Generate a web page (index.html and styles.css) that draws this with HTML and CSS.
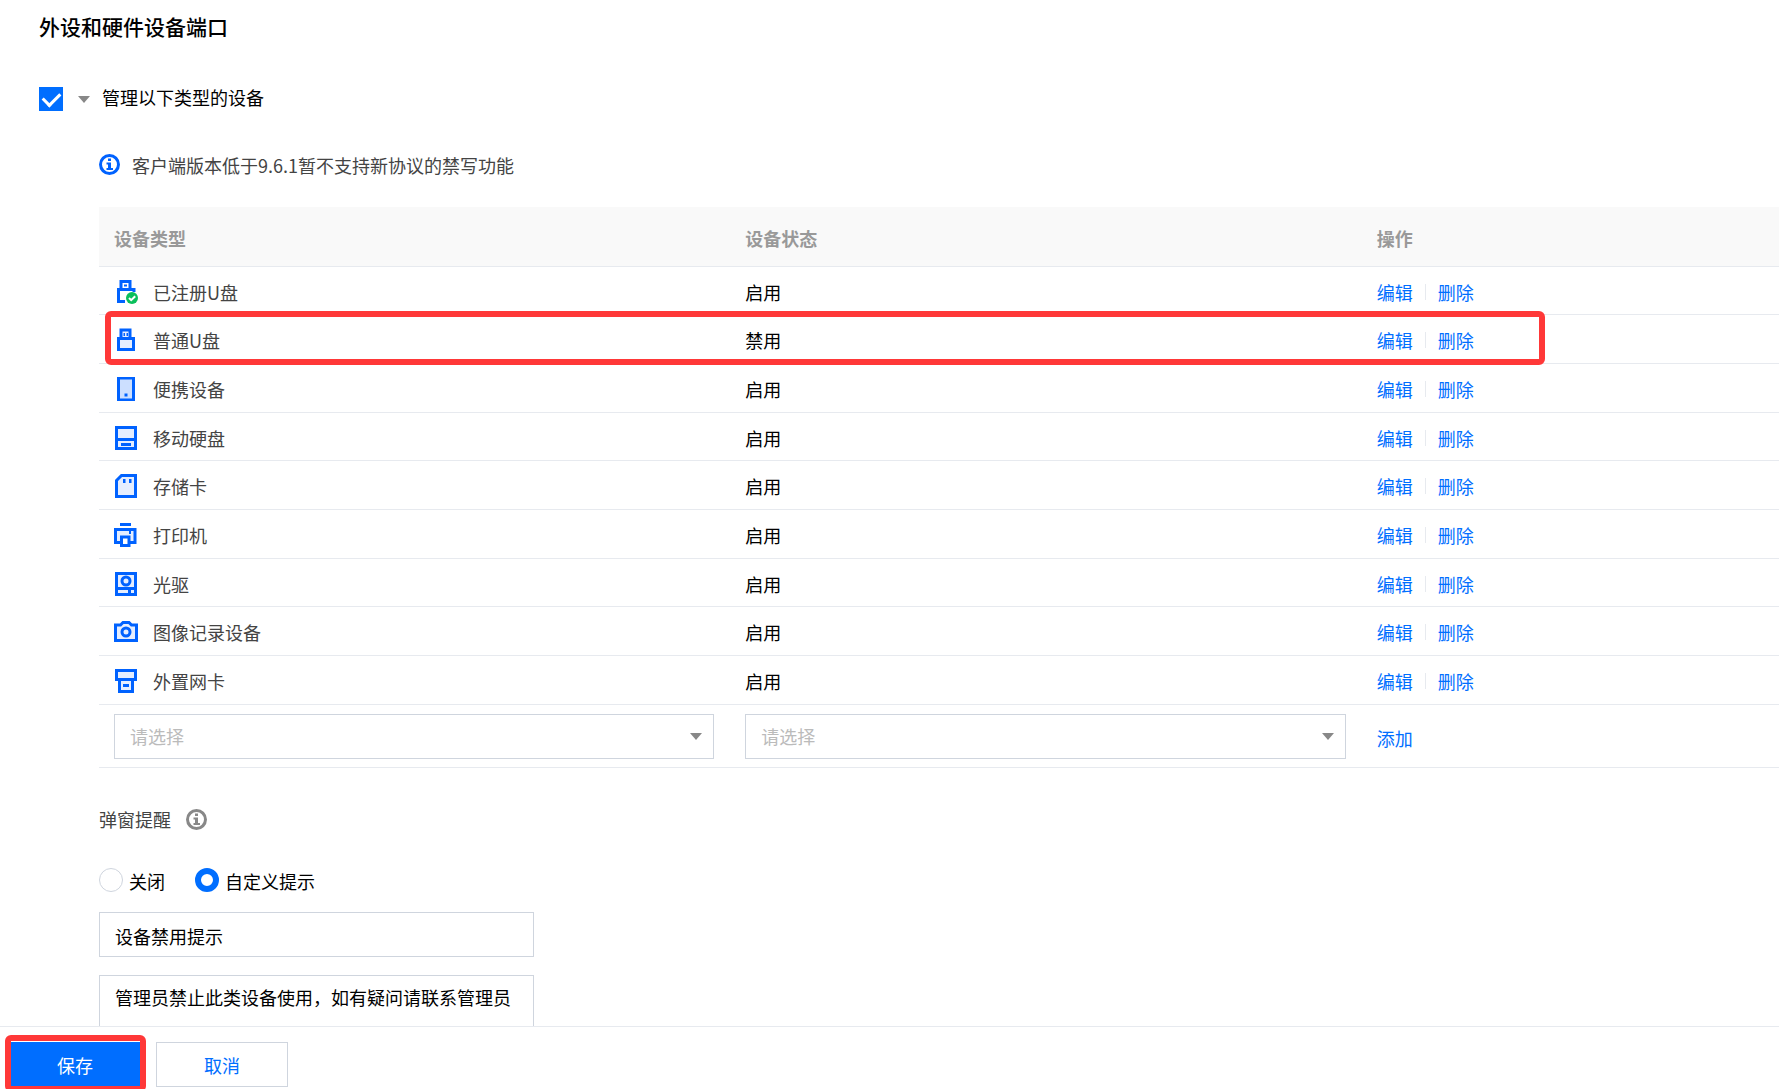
FILE: index.html
```html
<!doctype html>
<html lang="zh-CN">
<head>
    <meta charset="utf-8" />
    <title>外设和硬件设备端口</title>
    <link rel="stylesheet" href="styles.css">
</head>
<body>
    <div class="main">
        <h1>外设和硬件设备端口</h1>
        <div class="manage">
            <input type="checkbox" id="manage" checked>
            <span class="arrow"></span>
            <label for="manage">管理以下类型的设备</label>
        </div>
        <div class="content">
            <p class="tip">
                <svg class="info" viewBox="0 0 21 21"><circle cx="10.5" cy="10.5" r="9"/><path d="M9 4.500h3v2.500H9zM7.500 8.500h4.500v5.500h2v2h-6.500v-2h1.500v-3.500H7.500z"/></svg>
                <span>客户端版本低于9.6.1暂不支持新协议的禁写功能</span>
            </p>
            <table>
                <thead>
                    <tr><th class="col">设备类型</th><th class="col">设备状态</th><th>操作</th></tr>
                </thead>
                <tbody>
                    <tr>
                        <td><div class="name"><svg viewBox="0 0 24 24"><path class="line" d="M7 9V1.500h9V9M20 12V9.500H4.500V21.500H11"/><path class="solid" d="M10 4.500h3v2H10z"/><circle class="ok" cx="18" cy="18" r="6"/><path class="tick" d="M15 18l2.200 2.200 4-4"/></svg>已注册U盘</div></td>
                        <td>启用</td>
                        <td><a href="#">编辑</a><a href="#">删除</a></td>
                    </tr>
                    <tr class="marked">
                        <td><div class="name"><svg viewBox="0 0 24 24"><path class="line fill" d="M7 10V2h9v8"/><path class="line fill" d="M4.500 10.500h15v11h-15z"/><path class="solid" d="M9.500 5h1.500v3H9.500zM12.500 5H14v3h-1.500z"/></svg>普通U盘</div><span class="mark"></span></td>
                        <td>禁用</td>
                        <td><a href="#">编辑</a><a href="#">删除</a></td>
                    </tr>
                    <tr>
                        <td><div class="name"><svg viewBox="0 0 24 24"><path class="line dark" d="M4.500 1h15v22h-15z"/><path class="solid" d="M10.500 16.500h3v3h-3z"/></svg>便携设备</div></td>
                        <td>启用</td>
                        <td><a href="#">编辑</a><a href="#">删除</a></td>
                    </tr>
                    <tr>
                        <td><div class="name"><svg viewBox="0 0 24 24"><path class="line fill" d="M2.500 1.500h19v21h-19zM2.500 13.500h19"/><path class="solid" d="M7 17h10v3H7z"/></svg>移动硬盘</div></td>
                        <td>启用</td>
                        <td><a href="#">编辑</a><a href="#">删除</a></td>
                    </tr>
                    <tr>
                        <td><div class="name"><svg viewBox="0 0 24 24"><path class="line fill" d="M2.500 6.500L7.500 1.500h14v21h-19z"/><path class="solid" d="M9 5h2.500v4H9zM15 5h2.500v4H15z"/></svg>存储卡</div></td>
                        <td>启用</td>
                        <td><a href="#">编辑</a><a href="#">删除</a></td>
                    </tr>
                    <tr>
                        <td><div class="name"><svg viewBox="0 0 24 24"><path class="solid" d="M6 0h11v3H6z"/><path class="line fill" d="M1.500 6.500h19.500v13h-19.500z"/><path class="solid" d="M15 8h2v3h-2z"/><path class="line white" d="M7.500 14h7.500v8.500h-7.500z"/></svg>打印机</div></td>
                        <td>启用</td>
                        <td><a href="#">编辑</a><a href="#">删除</a></td>
                    </tr>
                    <tr>
                        <td><div class="name"><svg viewBox="0 0 24 24"><path class="line fill" d="M2.500 1.500h19v21h-19zM2.500 16.500h19M15.500 17v5"/><circle class="line fill" cx="12" cy="9" r="4"/></svg>光驱</div></td>
                        <td>启用</td>
                        <td><a href="#">编辑</a><a href="#">删除</a></td>
                    </tr>
                    <tr>
                        <td><div class="name"><svg viewBox="0 0 24 24"><path class="line fill" d="M1.500 5h5L9 2.500h6l2.500 2.500h5v15.500h-21z"/><circle class="line fill" cx="12" cy="12" r="4"/></svg>图像记录设备</div></td>
                        <td>启用</td>
                        <td><a href="#">编辑</a><a href="#">删除</a></td>
                    </tr>
                    <tr>
                        <td><div class="name"><svg viewBox="0 0 24 24"><path class="line fill" d="M2.500 1.500h19v9h-19z"/><path class="line fill" d="M5.500 10.500h13v12h-13z"/><path class="solid" d="M9 15h6v3H9z"/></svg>外置网卡</div></td>
                        <td>启用</td>
                        <td><a href="#">编辑</a><a href="#">删除</a></td>
                    </tr>
                    <tr class="add">
                        <td><div class="select"><select aria-label="设备类型"><option>请选择</option></select></div></td>
                        <td><div class="select"><select aria-label="设备状态"><option>请选择</option></select></div></td>
                        <td><a href="#">添加</a></td>
                    </tr>
                </tbody>
            </table>
            <div class="popup">
                <span>弹窗提醒</span>
                <svg class="info gray" viewBox="0 0 21 21"><circle cx="10.5" cy="10.5" r="9"/><path d="M9 4.500h3v2.500H9zM7.500 8.500h4.500v5.500h2v2h-6.500v-2h1.500v-3.500H7.500z"/></svg>
            </div>
            <div class="radios">
                <label><input type="radio" name="popup"><span>关闭</span></label>
                <label><input type="radio" name="popup" checked><span>自定义提示</span></label>
            </div>
            <input type="text" class="text" aria-label="提示标题" value="设备禁用提示">
            <textarea class="text" aria-label="提示内容">管理员禁止此类设备使用，如有疑问请联系管理员</textarea>
        </div>
    </div>
    <div class="footer">
        <div class="save"><button type="button" class="primary">保存</button><span class="mark"></span></div>
        <button type="button">取消</button>
    </div>
</body>
</html>
```

FILE: styles.css
```css
*{
    box-sizing:border-box;
}
body{
    display:flex;
    flex-direction:column;
    height:100vh;
    margin:0;
    overflow:hidden;
    font:18px/24px "Noto Sans CJK SC", sans-serif;
    color:#000;
    background-color:#fff;
}
input, select, textarea, button{
    margin:0;
    font:inherit;
    color:inherit;
}
.main{
    flex:1;
    min-height:0;
    overflow:auto;
    scrollbar-width:none;
    padding:14px 0 0 39px;
}
h1{
    margin:0;
    font-size:21px;
    line-height:24px;
    font-weight:500;
}
.manage{
    display:flex;
    align-items:center;
    margin-top:47px;
}
.manage input{
    appearance:none;
    width:24px;
    height:24px;
    background-color:#006eff;
    display:flex;
    align-items:center;
    justify-content:center;
}
.manage input:checked::before{
    content:"";
    width:14px;
    height:8px;
    margin-bottom:4px;
    border:solid #fff;
    border-width:0 0 3px 3px;
    transform:rotate(-45deg);
}
.arrow{
    margin:0 12px 0 15px;
    border:6px solid transparent;
    border-top:7px solid #888;
    border-bottom:0;
}
.manage label{
    margin-bottom:4px;
}
.content{
    padding:40px 0 40px 60px;
}
.tip{
    display:flex;
    align-items:center;
    gap:12px;
    margin:0 0 30px;
    color:#444;
}
.info{
    width:21px;
    height:21px;
    fill:#0062ff;
}
.tip .info{
    margin-bottom:2px;
}
.info circle{
    fill:none;
    stroke:#0062ff;
    stroke-width:3;
}
.gray{
    fill:#888;
}
.gray circle{
    stroke:#888;
}

table{
    width:100%;
    table-layout:fixed;
    border-spacing:0;
}
.col{
    width:37.58%;
}
th{
    height:60px;
    padding:2px 16px 0 15px;
    text-align:left;
    font-weight:700;
    color:#999;
    background-color:#f9f9f9;
    border-bottom:1px solid #e7eaef;
}
td{
    height:49px;
    padding:2px 16px 0 15px;
    border-bottom:1px solid #e7eaef;
}
tr:nth-child(3n+1) td{
    height:48px;
}
tbody tr{
    position:relative;
}
.name{
    display:flex;
    align-items:center;
    gap:15px;
    color:#444;
}
.name svg{
    width:24px;
    height:24px;
}
.line{
    fill:none;
    stroke:#0062ff;
    stroke-width:3;
}
.fill{
    fill:#e5eeff;
}
.dark{
    fill:#ccdfff;
}
.white{
    fill:#fff;
}
.solid{
    fill:#0062ff;
}
.ok{
    fill:#0abf5b;
}
.tick{
    fill:none;
    stroke:#fff;
    stroke-width:2;
}
a{
    color:#006eff;
    text-decoration:none;
}
a + a{
    margin-left:12px;
    padding-left:13px;
    background:linear-gradient(#e7eaef, #e7eaef) 0 center / 1px 16px no-repeat;
}
tr.add td{
    height:63px;
    padding-top:0;
}
tr.add td:last-child{
    padding-top:4px;
}
.select{
    position:relative;
}
.select::after{
    content:"";
    position:absolute;
    right:12px;
    top:19px;
    border:6px solid transparent;
    border-top:7px solid #888;
    border-bottom:0;
}
select{
    display:block;
    appearance:none;
    width:100%;
    height:45px;
    padding:0 15px;
    color:#bbb;
    background-color:#fff;
    border:1px solid #cfd5de;
    border-radius:0;
}

.popup{
    display:flex;
    align-items:center;
    gap:15px;
    margin-top:39px;
    color:#444;
}
.radios{
    display:flex;
    gap:30px;
    margin:35px 0 19px;
}
.radios label{
    display:flex;
    align-items:center;
    gap:6px;
}
.radios span{
    padding-top:3px;
}
.radios input{
    appearance:none;
    width:24px;
    height:24px;
    border:1px solid #cfd5de;
    border-radius:50%;
}
.radios input:checked{
    border:6px solid #006eff;
}
.text{
    display:block;
    width:435px;
    height:45px;
    padding:3px 15px 0;
    border:1px solid #cfd5de;
    background-color:#fff;
}
textarea.text{
    height:100px;
    margin-top:18px;
    padding-top:9px;
    resize:none;
}

.footer{
    display:flex;
    gap:15px;
    padding:15px 9px 2px;
    border-top:1px solid #e7eaef;
}
button{
    width:132px;
    height:45px;
    padding:0;
    color:#006eff;
    background-color:#fff;
    border:1px solid #cfd5de;
}
.primary{
    color:#fff;
    background-color:#006eff;
    border-color:#006eff;
}
.save{
    position:relative;
}

/* 红色标注框 */
.mark{
    position:absolute;
    border:6px solid #ff3838;
    border-radius:6px;
    pointer-events:none;
}
.marked .mark{
    left:6px;
    right:234px;
    top:-4px;
    bottom:-1px;
}
.save .mark{
    left:-4px;
    right:-5px;
    top:-7px;
    bottom:-5px;
}
```
